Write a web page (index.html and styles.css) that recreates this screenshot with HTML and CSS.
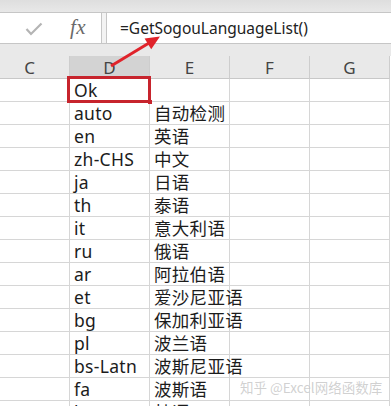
FILE: index.html
```html
<!DOCTYPE html>
<html lang="zh">
<head>
<meta charset="utf-8">
<link rel="stylesheet" href="styles.css">
</head>
<body>
<div class="top-strip"></div>
<div class="fbar">
  <div class="namebox">
    <svg class="check" width="18" height="14" viewBox="0 0 18 14"><polyline points="1.5,7 6,12 16.5,1.5" fill="none" stroke="#b4b4b4" stroke-width="2.2"/></svg>
    <span class="fx">fx</span>
  </div>
  <div class="gap"></div>
  <div class="formula">=GetSogouLanguageList()</div>
</div>
<div class="band"></div>
<div class="sheet">
  <div class="h">C</div><div class="h sel">D</div><div class="h">E</div><div class="h">F</div><div class="h">G</div>

  <div class="c"></div><div class="c ok">Ok</div><div class="c"></div><div class="c"></div><div class="c"></div>
  <div class="c"></div><div class="c">auto</div><div class="c">自动检测</div><div class="c"></div><div class="c"></div>
  <div class="c"></div><div class="c">en</div><div class="c">英语</div><div class="c"></div><div class="c"></div>
  <div class="c"></div><div class="c">zh-CHS</div><div class="c">中文</div><div class="c"></div><div class="c"></div>
  <div class="c"></div><div class="c">ja</div><div class="c">日语</div><div class="c"></div><div class="c"></div>
  <div class="c"></div><div class="c">th</div><div class="c">泰语</div><div class="c"></div><div class="c"></div>
  <div class="c"></div><div class="c">it</div><div class="c">意大利语</div><div class="c"></div><div class="c"></div>
  <div class="c"></div><div class="c">ru</div><div class="c">俄语</div><div class="c"></div><div class="c"></div>
  <div class="c"></div><div class="c">ar</div><div class="c">阿拉伯语</div><div class="c"></div><div class="c"></div>
  <div class="c"></div><div class="c">et</div><div class="c">爱沙尼亚语</div><div class="c"></div><div class="c"></div>
  <div class="c"></div><div class="c">bg</div><div class="c">保加利亚语</div><div class="c"></div><div class="c"></div>
  <div class="c"></div><div class="c">pl</div><div class="c">波兰语</div><div class="c"></div><div class="c"></div>
  <div class="c"></div><div class="c">bs-Latn</div><div class="c">波斯尼亚语</div><div class="c"></div><div class="c"></div>
  <div class="c"></div><div class="c">fa</div><div class="c">波斯语</div><div class="c"></div><div class="c"></div>
  <div class="c"></div><div class="c">ko</div><div class="c">韩语</div><div class="c"></div><div class="c"></div>
</div>
<svg class="arrow" width="391" height="406" viewBox="0 0 391 406">
  <line x1="111" y1="66" x2="149" y2="43" stroke="#e0232b" stroke-width="3"/>
  <polygon points="160,36.5 144.6,38.4 151.2,49.2" fill="#e0232b"/>
</svg>
<div class="watermark">知乎 @Excel网络函数库</div>
</body>
</html>
```
FILE: styles.css
```css
html, body {
  margin: 0;
  padding: 0;
}
body {
  width: 391px;
  height: 406px;
  overflow: hidden;
  background: #ffffff;
  position: relative;
  font-family: "Noto Sans", "Noto Sans CJK SC", sans-serif;
}
.top-strip {
  height: 12px;
  background: linear-gradient(#dedede, #e8e8e8);
}
.fbar {
  display: flex;
  height: 32px;
  box-sizing: border-box;
  border-top: 1px solid #c6c6c6;
  border-bottom: 1px solid #c6c6c6;
  background: #ffffff;
}
.namebox {
  width: 102px;
  flex: none;
  box-sizing: border-box;
  border-right: 1px solid #c6c6c6;
  display: flex;
  align-items: center;
  padding-left: 25px;
}
.check {
  display: block;
  margin-top: 2px;
}
.fx {
  font-family: "Liberation Serif", serif;
  font-style: italic;
  font-size: 21px;
  color: #6a6a6a;
  margin-left: 27px;
  margin-top: -2px;
  letter-spacing: 0.5px;
}
.gap {
  width: 4px;
  flex: none;
  background: #f3f3f3;
}
.formula {
  flex: 1;
  border-left: 1px solid #c6c6c6;
  padding-left: 13px;
  font-size: 15.5px;
  line-height: 30px;
  color: #222222;
}
.band {
  height: 12px;
  background: #e9e9e9;
}
.sheet {
  display: grid;
  grid-template-columns: repeat(5, 80px);
  grid-auto-rows: 23px;
  margin-left: -10px;
}
.h {
  box-sizing: border-box;
  background: #e9e9e9;
  border-right: 1px solid #cdcdcd;
  border-bottom: 1px solid #c8c8c8;
  text-align: center;
  font-size: 17px;
  line-height: 23px;
  color: #444444;
}
.h.sel {
  background: #d3d3d3;
}
.c {
  box-sizing: border-box;
  border-right: 1px solid #d6d6d6;
  border-bottom: 1px solid #d6d6d6;
  padding-left: 4px;
  font-size: 17.5px;
  line-height: 23px;
  color: #1c1c1c;
  white-space: nowrap;
  letter-spacing: 0.3px;
}
.ok {
  position: relative;
}
.ok::after {
  content: "";
  position: absolute;
  left: -3px;
  top: -3px;
  right: -2px;
  bottom: -2px;
  border: 3px solid #c7242d;
}
.ok::before {
  content: "";
  position: absolute;
  right: -3px;
  bottom: -3px;
  width: 4px;
  height: 4px;
  background: #c7242d;
  z-index: 1;
}
.arrow {
  position: absolute;
  left: 0;
  top: 0;
}
.watermark {
  position: absolute;
  left: 240px;
  top: 379px;
  font-family: "Noto Sans CJK SC", sans-serif;
  font-size: 13.5px;
  line-height: 16px;
  color: rgba(170, 170, 170, 0.55);
  text-shadow: 0 0 1px rgba(255, 255, 255, 0.8);
  white-space: nowrap;
}
```
